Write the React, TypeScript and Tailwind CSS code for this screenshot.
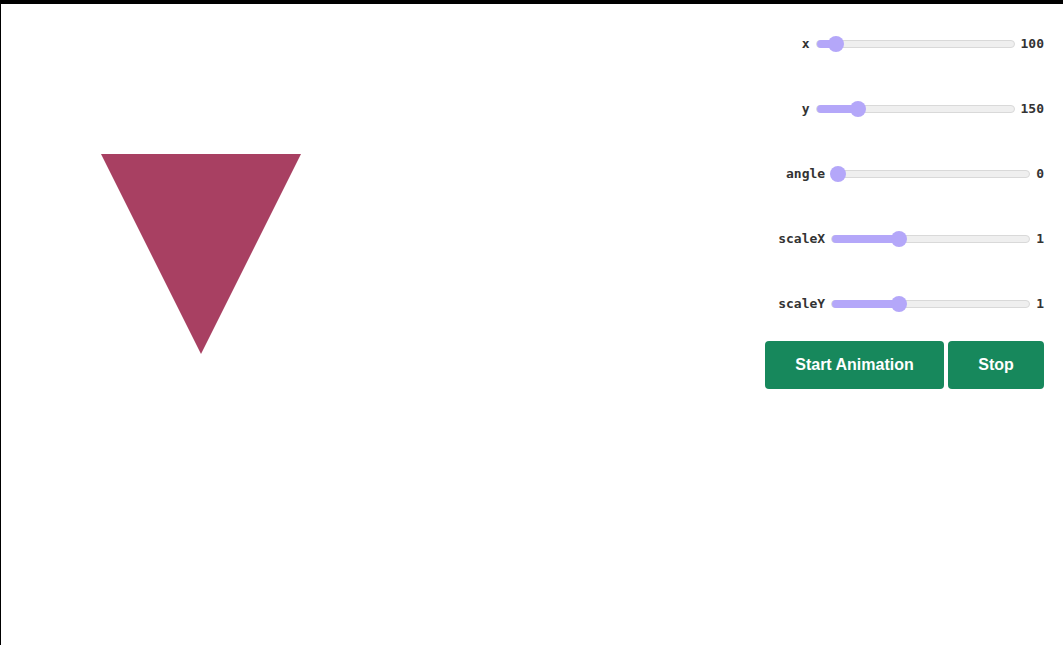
import React from 'react';

const sliders = [
  { label: 'x', value: '100', pos: 20 },
  { label: 'y', value: '150', pos: 42 },
  { label: 'angle', value: '0', pos: 7 },
  { label: 'scaleX', value: '1', pos: 68 },
  { label: 'scaleY', value: '1', pos: 68 },
];

function Slider({ label, value, pos }: { label: string; value: string; pos: number }) {
  return (
    <div className="flex items-center h-4 font-['DejaVu_Sans_Mono',monospace] text-[13px] font-bold text-[#333]">
      <span className="mr-[6px]">{label}</span>
      {/* track */}
      <div className="relative w-[199px] h-2 rounded-full bg-[#efefef] border border-[#d9d9d9]">
        <div className="absolute left-0 top-[-1px] h-2 rounded-full bg-[#b4a7f9]" style={{ width: pos }} />
        <div
          className="absolute top-[-5px] w-4 h-4 rounded-full bg-[#b4a7f9]"
          style={{ left: pos - 9 }}
        />
      </div>
      <span className="ml-[6px]">{value}</span>
    </div>
  );
}

export default function App() {
  return (
    <div className="w-full h-[645px] border-t-4 border-l border-black bg-white flex justify-between overflow-hidden">
      {/* canvas */}
      <div className="relative flex-1">
        <svg className="absolute left-[100px] top-[150px]" width="200" height="200" viewBox="0 0 200 200">
          <polygon points="0,0 200,0 100,200" fill="#a84062" />
        </svg>
      </div>

      {/* controls */}
      <div className="flex flex-col items-end pt-[32px] pr-[19px]">
        <div className="flex flex-col items-end gap-[49px]">
          {sliders.map((s) => (
            <Slider key={s.label} {...s} />
          ))}
        </div>
        <div className="flex gap-1 mt-[29px]">
          <button className="h-12 w-[179px] rounded bg-[#17885c] text-white text-base font-bold font-['Liberation_Sans',Arial,sans-serif]">
            Start Animation
          </button>
          <button className="h-12 w-[96px] rounded bg-[#17885c] text-white text-base font-bold font-['Liberation_Sans',Arial,sans-serif]">
            Stop
          </button>
        </div>
      </div>
    </div>
  );
}
